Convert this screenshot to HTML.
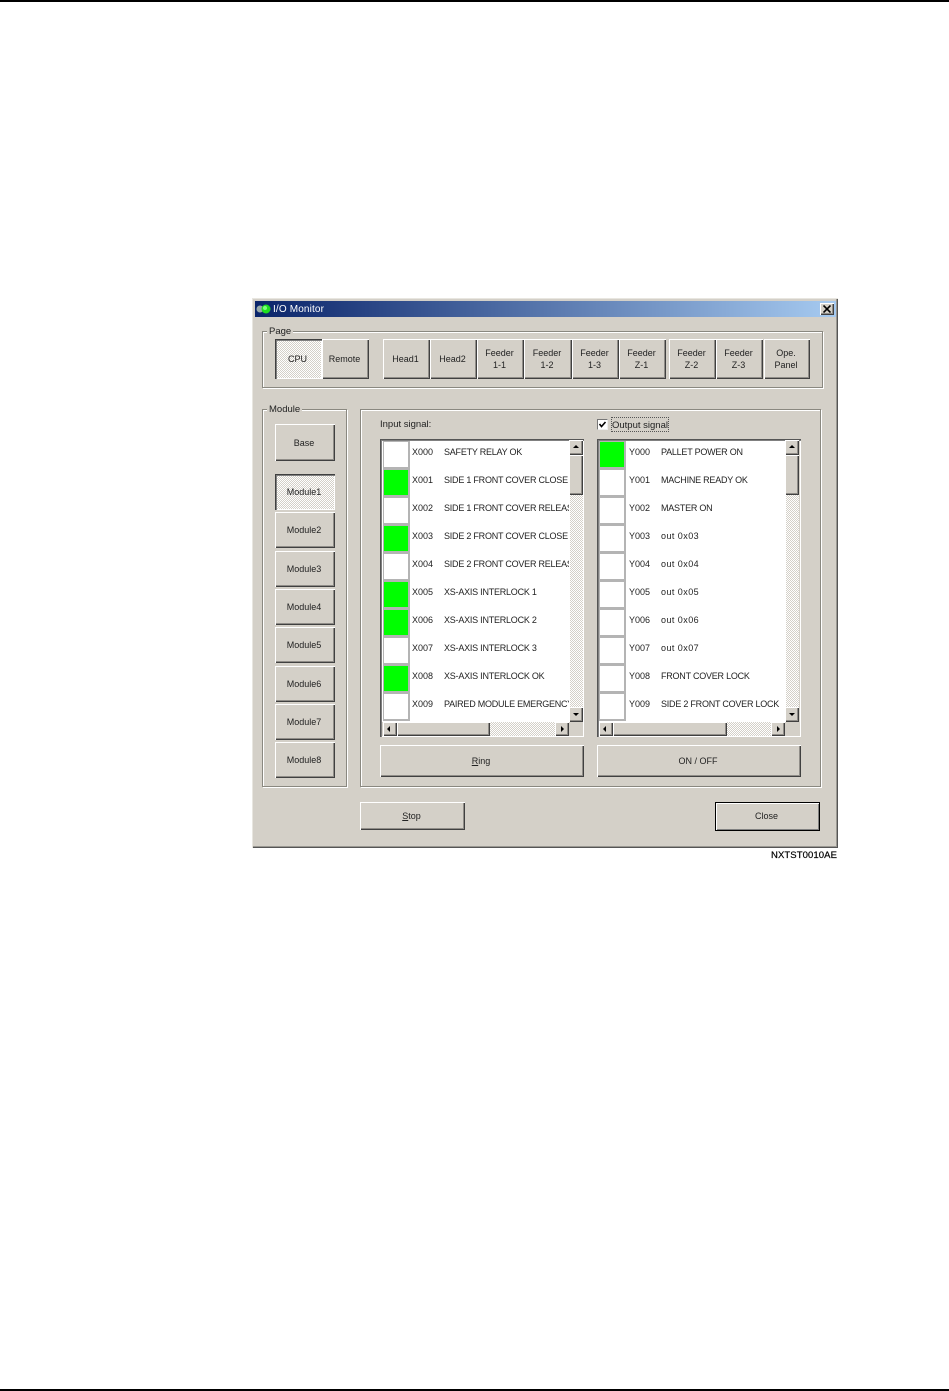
<!DOCTYPE html>
<html><head><meta charset="utf-8"><title>I/O Monitor</title>
<style>
html,body{margin:0;padding:0;background:#fff}
body{position:relative;width:949px;height:1391px;overflow:hidden;font-family:"Liberation Sans",sans-serif;font-size:9px;color:#222}
div,span.t{position:absolute;box-sizing:border-box}
.b{background:#d4d0c8;box-shadow:inset 1px 1px #fff,inset -1px -1px #404040,inset -2px -2px #908d88;display:flex;align-items:center;justify-content:center;text-align:center;line-height:12px;white-space:pre;padding-right:2px}
.on{background:repeating-conic-gradient(#fff 0 25%,#d4d0c8 0 50%) 0 0/2px 2px;box-shadow:inset 1px 1px #404040,inset 2px 2px #808080,inset -1px -1px #fff}
.g{border:1px solid #8a8880;box-shadow:1px 1px #fff,inset 1px 1px #fff}
.l{background:#d4d0c8;padding:0 2px;line-height:11px;height:11px;font-size:9.5px}
.c{width:27px;height:28px;border:1px solid #b4b4b4;border-width:1px 2px 2px 1px;background:#fff}
.y{background:#0f0}
.x{white-space:pre;line-height:12px;height:12px}
.n{letter-spacing:-.23px}
.o{letter-spacing:.45px}
.tr{background:repeating-conic-gradient(#fff 0 25%,#d4d0c8 0 50%) 0 0/2px 2px}
.a{width:0;height:0;border-style:solid;border-color:transparent}
</style></head><body>
<div style="left:0;top:0;width:949px;height:2px;background:#000"></div>
<div style="left:0;top:1389px;width:949px;height:2px;background:#000"></div>

<div style="left:252px;top:298px;width:586px;height:550px;background:#d4d0c8;box-shadow:inset 1px 1px #e8e6e0,inset -1px -1px #555,inset -2px -2px #9a9892"></div>
<div style="left:255px;top:301px;width:581px;height:16px;background:linear-gradient(90deg,#0a246a,#a6caf0)"></div>
<svg style="position:absolute;left:256px;top:303px" width="16" height="12" viewBox="0 0 16 12"><circle cx="4" cy="6" r="3.5" fill="#9aa"/><circle cx="10" cy="6" r="4.5" fill="#1fe01f"/><circle cx="9" cy="5" r="2" fill="#7dff7d"/></svg>
<div class="x" style="left:273px;top:304px;color:#fff;font-size:10px;letter-spacing:.15px">I/O Monitor</div>
<div class="b" style="left:820px;top:303px;width:14px;height:12px;padding:0"><svg width="8" height="8" viewBox="0 0 8 8"><path d="M0.5 0.5L7.5 7.5M7.5 0.5L0.5 7.5" stroke="#000" stroke-width="1.6"/></svg></div>

<div class="g" style="left:262px;top:331px;width:561px;height:57px"></div>
<div class="l" style="left:267px;top:326px">Page</div>
<div class="b on" style="left:275px;top:339px;width:47px;height:40px">CPU</div>
<div class="b" style="left:322px;top:339px;width:47px;height:40px">Remote</div>
<div class="b" style="left:383px;top:339px;width:47px;height:40px">Head1</div>
<div class="b" style="left:430px;top:339px;width:47px;height:40px">Head2</div>
<div class="b" style="left:477px;top:339px;width:47px;height:40px">Feeder
1-1</div>
<div class="b" style="left:524px;top:339px;width:48px;height:40px">Feeder
1-2</div>
<div class="b" style="left:572px;top:339px;width:47px;height:40px">Feeder
1-3</div>
<div class="b" style="left:619px;top:339px;width:47px;height:40px">Feeder
Z-1</div>
<div class="b" style="left:669px;top:339px;width:47px;height:40px">Feeder
Z-2</div>
<div class="b" style="left:716px;top:339px;width:47px;height:40px">Feeder
Z-3</div>
<div class="b" style="left:764px;top:339px;width:46px;height:40px">Ope.
Panel</div>

<div class="g" style="left:262px;top:409px;width:85px;height:378px"></div>
<div class="l" style="left:267px;top:404px">Module</div>
<div class="b" style="left:275px;top:424px;width:60px;height:37px">Base</div>
<div class="b on" style="left:275px;top:474px;width:60px;height:36px">Module1</div>
<div class="b" style="left:275px;top:512px;width:60px;height:36px">Module2</div>
<div class="b" style="left:275px;top:551px;width:60px;height:36px">Module3</div>
<div class="b" style="left:275px;top:589px;width:60px;height:36px">Module4</div>
<div class="b" style="left:275px;top:627px;width:60px;height:36px">Module5</div>
<div class="b" style="left:275px;top:666px;width:60px;height:36px">Module6</div>
<div class="b" style="left:275px;top:704px;width:60px;height:36px">Module7</div>
<div class="b" style="left:275px;top:742px;width:60px;height:36px">Module8</div>

<div class="g" style="left:360px;top:409px;width:461px;height:378px"></div>
<div class="x" style="left:380px;top:418px;font-size:9.5px;padding-top:1px;height:14px">Input signal:</div>
<div style="left:597px;top:419px;width:11px;height:11px;background:#fff;border:1px solid #777;border-right-color:#eee;border-bottom-color:#eee"></div>
<svg style="position:absolute;left:598px;top:420px" width="9" height="9" viewBox="0 0 9 9"><path d="M1.5 4L3.5 6.5L7.5 2" fill="none" stroke="#000" stroke-width="1.6"/></svg>
<div style="left:611px;top:417px;width:58px;height:15px;border:1px dotted #555"></div>
<div class="x" style="left:612px;top:420px;font-size:9.5px">Output signal</div>

<!-- left list -->
<div style="left:380px;top:439px;width:204px;height:298px;background:#d4d0c8;box-shadow:inset 1px 1px #555,inset 2px 2px #808080,inset -1px -1px #fff"></div>
<div style="left:382px;top:441px;width:188px;height:281px;background:#fff;overflow:hidden"></div>
<div class="c" style="left:383px;top:441px"></div><div class="x" style="left:412px;top:446px">X000</div><div class="x n" style="left:444px;top:446px">SAFETY RELAY OK</div>
<div class="c y" style="left:383px;top:469px"></div><div class="x" style="left:412px;top:474px">X001</div><div class="x n" style="left:444px;top:474px;width:125px;overflow:hidden">SIDE 1 FRONT COVER CLOSE</div>
<div class="c" style="left:383px;top:497px"></div><div class="x" style="left:412px;top:502px">X002</div><div class="x n" style="left:444px;top:502px;width:125px;overflow:hidden">SIDE 1 FRONT COVER RELEASE</div>
<div class="c y" style="left:383px;top:525px"></div><div class="x" style="left:412px;top:530px">X003</div><div class="x n" style="left:444px;top:530px;width:125px;overflow:hidden">SIDE 2 FRONT COVER CLOSE</div>
<div class="c" style="left:383px;top:553px"></div><div class="x" style="left:412px;top:558px">X004</div><div class="x n" style="left:444px;top:558px;width:125px;overflow:hidden">SIDE 2 FRONT COVER RELEASE</div>
<div class="c y" style="left:383px;top:581px"></div><div class="x" style="left:412px;top:586px">X005</div><div class="x n" style="left:444px;top:586px">XS-AXIS INTERLOCK 1</div>
<div class="c y" style="left:383px;top:609px"></div><div class="x" style="left:412px;top:614px">X006</div><div class="x n" style="left:444px;top:614px">XS-AXIS INTERLOCK 2</div>
<div class="c" style="left:383px;top:637px"></div><div class="x" style="left:412px;top:642px">X007</div><div class="x n" style="left:444px;top:642px">XS-AXIS INTERLOCK 3</div>
<div class="c y" style="left:383px;top:665px"></div><div class="x" style="left:412px;top:670px">X008</div><div class="x n" style="left:444px;top:670px">XS-AXIS INTERLOCK OK</div>
<div class="c" style="left:383px;top:693px"></div><div class="x" style="left:412px;top:698px">X009</div><div class="x n" style="left:444px;top:698px;width:125px;overflow:hidden">PAIRED MODULE EMERGENCY</div>
<div class="tr" style="left:570px;top:440px;width:13px;height:280px"></div>
<div class="b" style="left:569px;top:440px;width:14px;height:15px"><div class="a" style="left:4px;top:5px;border-width:0 3px 3px;border-bottom-color:#000"></div></div>
<div class="b" style="left:569px;top:455px;width:14px;height:40px"></div>
<div class="b" style="left:569px;top:707px;width:14px;height:15px"><div class="a" style="left:4px;top:6px;border-width:3px 3px 0;border-top-color:#000"></div></div>
<div class="tr" style="left:383px;top:722px;width:186px;height:14px"></div>
<div class="b" style="left:383px;top:722px;width:14px;height:14px"><div class="a" style="left:4px;top:4px;border-width:3px 3px 3px 0;border-right-color:#000"></div></div>
<div class="b" style="left:397px;top:722px;width:93px;height:14px"></div>
<div class="b" style="left:555px;top:722px;width:14px;height:14px"><div class="a" style="left:6px;top:4px;border-width:3px 0 3px 3px;border-left-color:#000"></div></div>

<!-- right list -->
<div style="left:597px;top:439px;width:204px;height:298px;background:#d4d0c8;box-shadow:inset 1px 1px #555,inset 2px 2px #808080,inset -1px -1px #fff"></div>
<div style="left:599px;top:441px;width:187px;height:281px;background:#fff"></div>
<div class="c y" style="left:599px;top:441px"></div><div class="x" style="left:629px;top:446px">Y000</div><div class="x n" style="left:661px;top:446px">PALLET POWER ON</div>
<div class="c" style="left:599px;top:469px"></div><div class="x" style="left:629px;top:474px">Y001</div><div class="x n" style="left:661px;top:474px">MACHINE READY OK</div>
<div class="c" style="left:599px;top:497px"></div><div class="x" style="left:629px;top:502px">Y002</div><div class="x n" style="left:661px;top:502px">MASTER ON</div>
<div class="c" style="left:599px;top:525px"></div><div class="x" style="left:629px;top:530px">Y003</div><div class="x o" style="left:661px;top:530px">out 0x03</div>
<div class="c" style="left:599px;top:553px"></div><div class="x" style="left:629px;top:558px">Y004</div><div class="x o" style="left:661px;top:558px">out 0x04</div>
<div class="c" style="left:599px;top:581px"></div><div class="x" style="left:629px;top:586px">Y005</div><div class="x o" style="left:661px;top:586px">out 0x05</div>
<div class="c" style="left:599px;top:609px"></div><div class="x" style="left:629px;top:614px">Y006</div><div class="x o" style="left:661px;top:614px">out 0x06</div>
<div class="c" style="left:599px;top:637px"></div><div class="x" style="left:629px;top:642px">Y007</div><div class="x o" style="left:661px;top:642px">out 0x07</div>
<div class="c" style="left:599px;top:665px"></div><div class="x" style="left:629px;top:670px">Y008</div><div class="x n" style="left:661px;top:670px">FRONT COVER LOCK</div>
<div class="c" style="left:599px;top:693px"></div><div class="x" style="left:629px;top:698px">Y009</div><div class="x n" style="left:661px;top:698px">SIDE 2 FRONT COVER LOCK</div>
<div class="tr" style="left:786px;top:440px;width:13px;height:280px"></div>
<div class="b" style="left:785px;top:440px;width:14px;height:15px"><div class="a" style="left:4px;top:5px;border-width:0 3px 3px;border-bottom-color:#000"></div></div>
<div class="b" style="left:785px;top:455px;width:14px;height:40px"></div>
<div class="b" style="left:785px;top:707px;width:14px;height:15px"><div class="a" style="left:4px;top:6px;border-width:3px 3px 0;border-top-color:#000"></div></div>
<div class="tr" style="left:599px;top:722px;width:186px;height:14px"></div>
<div class="b" style="left:599px;top:722px;width:14px;height:14px"><div class="a" style="left:4px;top:4px;border-width:3px 3px 3px 0;border-right-color:#000"></div></div>
<div class="b" style="left:613px;top:722px;width:114px;height:14px"></div>
<div class="b" style="left:771px;top:722px;width:14px;height:14px"><div class="a" style="left:6px;top:4px;border-width:3px 0 3px 3px;border-left-color:#000"></div></div>

<div class="b" style="left:380px;top:745px;width:204px;height:32px"><span><u>R</u>ing</span></div>
<div class="b" style="left:597px;top:745px;width:204px;height:32px">ON / OFF</div>
<div class="b" style="left:360px;top:802px;width:105px;height:28px"><span><u>S</u>top</span></div>
<div class="b" style="left:715px;top:802px;width:105px;height:29px;padding-bottom:2px;box-shadow:inset 0 0 0 1px #000,inset 2px 2px #fff,inset -2px -2px #808080">Close</div>

<div class="x" style="left:771px;top:850px;width:67px;color:#000;font-size:9.5px;letter-spacing:.1px;-webkit-text-stroke:.2px #000">NXTST0010AE</div>
</body></html>
